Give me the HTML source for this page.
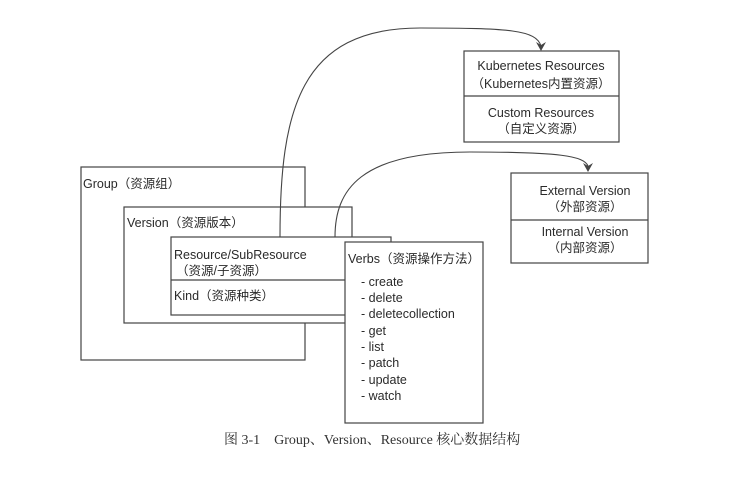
<!DOCTYPE html>
<html><head><meta charset="utf-8"><style>
html,body{margin:0;padding:0;background:#fff;}
svg text{font-family:"Liberation Sans","Noto Sans CJK SC",sans-serif;font-size:12.5px;fill:#2a2a2a;}
svg text.cap{font-family:"Liberation Serif","Noto Serif CJK SC",serif;font-size:14px;fill:#333;}
</style></head><body>
<svg width="745" height="475" viewBox="0 0 745 475" xmlns="http://www.w3.org/2000/svg">
<g fill="#fff" stroke="#444" stroke-width="1.2">
<rect x="81" y="167" width="224" height="193"/>
<rect x="124" y="207" width="228" height="116"/>
<rect x="171" y="237" width="220" height="78"/>
<line x1="171" y1="280" x2="345" y2="280"/>
<rect x="345" y="242" width="138" height="181"/>
<rect x="464" y="51" width="155" height="91"/>
<line x1="464" y1="96" x2="619" y2="96"/>
<rect x="511" y="173" width="137" height="90"/>
<line x1="511" y1="220" x2="648" y2="220"/>
</g>
<g fill="none" stroke="#444" stroke-width="1.1">
<path d="M280 237 C280 110 300 28 420 28 C510 28 536 30 541 46"/>
<path d="M335 237 C335 190 360 152 470 152 C560 152 584 156 588 166"/>
</g>
<path d="M536 42 L541 51 L546 42 L541 45 Z" fill="#444"/>
<path d="M583 163 L588 172 L593 163 L588 166 Z" fill="#444"/>
<text x="83" y="188">Group（资源组）</text>
<text x="127" y="227">Version（资源版本）</text>
<text x="174" y="259">Resource/SubResource</text>
<text x="176" y="275">（资源/子资源）</text>
<text x="174" y="300">Kind（资源种类）</text>
<text x="348" y="263">Verbs（资源操作方法）</text>
<text x="361" y="286">- create</text>
<text x="361" y="302">- delete</text>
<text x="361" y="318">- deletecollection</text>
<text x="361" y="335">- get</text>
<text x="361" y="351">- list</text>
<text x="361" y="367">- patch</text>
<text x="361" y="384">- update</text>
<text x="361" y="400">- watch</text>
<text x="541" y="70" text-anchor="middle">Kubernetes Resources</text>
<text x="541" y="88" text-anchor="middle">（Kubernetes内置资源）</text>
<text x="541" y="117" text-anchor="middle">Custom Resources</text>
<text x="541" y="133" text-anchor="middle">（自定义资源）</text>
<text x="585" y="195" text-anchor="middle">External Version</text>
<text x="585" y="211" text-anchor="middle">（外部资源）</text>
<text x="585" y="236" text-anchor="middle">Internal Version</text>
<text x="585" y="252" text-anchor="middle">（内部资源）</text>
<text class="cap" x="224" y="444">图 3-1　Group、Version、Resource 核心数据结构</text>
</svg>
</body></html>
